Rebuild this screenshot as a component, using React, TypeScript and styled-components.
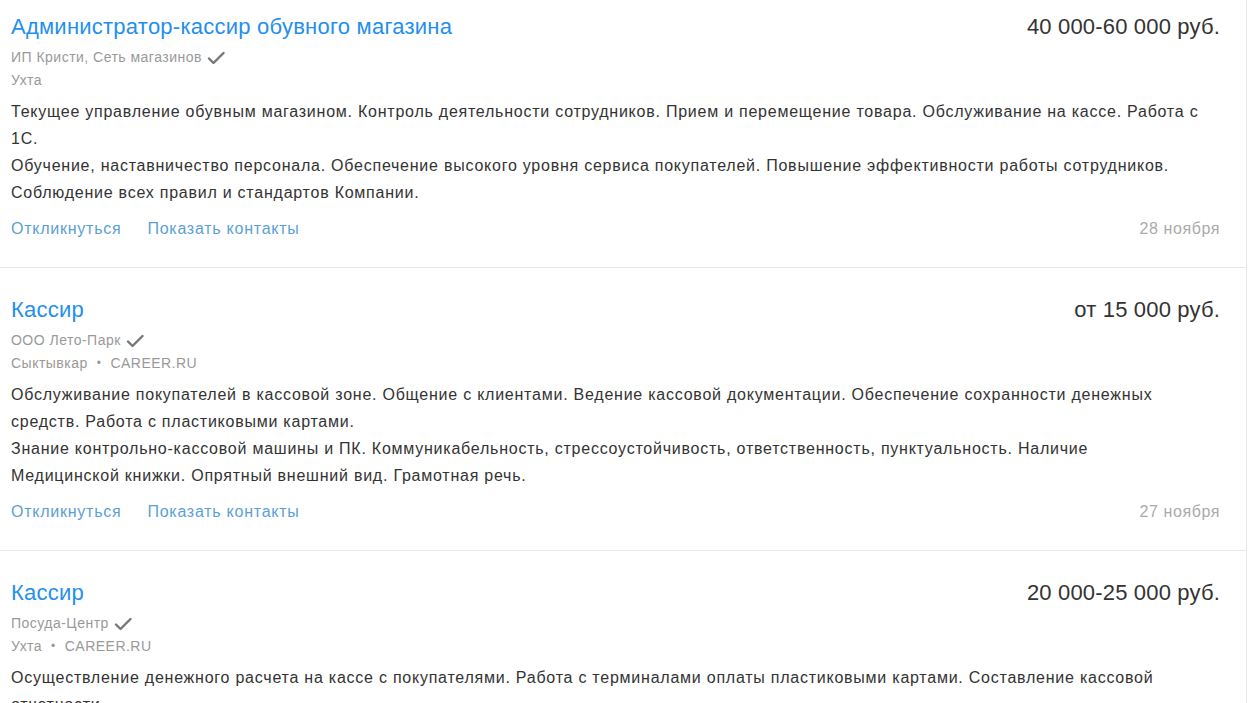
import React from "react";
import styled, { createGlobalStyle } from "styled-components";

const GlobalStyle = createGlobalStyle`
  html, body {
    margin: 0;
    padding: 0;
    overflow: hidden;
    background: #fff;
    font-family: "Liberation Sans", Arial, sans-serif;
  }
`;

interface Vacancy {
  title: string;
  salary: string;
  company: string;
  city: string;
  source?: string;
  paragraphs: string[];
  date: string;
}

const vacancies: Vacancy[] = [
  {
    title: "Администратор-кассир обувного магазина",
    salary: "40 000-60 000 руб.",
    company: "ИП Кристи, Сеть магазинов",
    city: "Ухта",
    paragraphs: [
      "Текущее управление обувным магазином. Контроль деятельности сотрудников. Прием и перемещение товара. Обслуживание на кассе. Работа с 1С.",
      "Обучение, наставничество персонала. Обеспечение высокого уровня сервиса покупателей. Повышение эффективности работы сотрудников. Соблюдение всех правил и стандартов Компании.",
    ],
    date: "28 ноября",
  },
  {
    title: "Кассир",
    salary: "от 15 000 руб.",
    company: "ООО Лето-Парк",
    city: "Сыктывкар",
    source: "CAREER.RU",
    paragraphs: [
      "Обслуживание покупателей в кассовой зоне. Общение с клиентами. Ведение кассовой документации. Обеспечение сохранности денежных средств. Работа с пластиковыми картами.",
      "Знание контрольно-кассовой машины и ПК. Коммуникабельность, стрессоустойчивость, ответственность, пунктуальность. Наличие Медицинской книжки. Опрятный внешний вид. Грамотная речь.",
    ],
    date: "27 ноября",
  },
  {
    title: "Кассир",
    salary: "20 000-25 000 руб.",
    company: "Посуда-Центр",
    city: "Ухта",
    source: "CAREER.RU",
    paragraphs: [
      "Осуществление денежного расчета на кассе с покупателями. Работа с терминалами оплаты пластиковыми картами. Составление кассовой отчетности.",
      "Ответственность, внимательность, доброжелательность. Опыт работы кассиром приветствуется.",
    ],
    date: "27 ноября",
  },
];

const List = styled.div`
  width: 1247px;
  box-sizing: border-box;
  border-right: 1px solid #e6e6e6;
`;

const Card = styled.div`
  padding: 28px 26px 25px 11px;
  border-bottom: 1px solid #e6e6e6;

  &:first-child {
    padding-top: 13px;
  }
`;

const TitleRow = styled.div`
  display: flex;
  justify-content: space-between;
  align-items: baseline;
  margin-bottom: 5px;
`;

const Title = styled.a`
  font-size: 22px;
  line-height: 28px;
  letter-spacing: 0.24px;
  color: #1f8ff0;
  text-decoration: none;
  cursor: pointer;
`;

const Salary = styled.div`
  font-size: 22px;
  line-height: 28px;
  letter-spacing: 0.17px;
  color: #333;
`;

const MetaRow = styled.div`
  display: flex;
  align-items: center;
  font-size: 14px;
  line-height: 23px;
  letter-spacing: 0.48px;
  color: #999;
`;

const Check = styled.svg`
  width: 18px;
  height: 14px;
  margin-left: 5px;
`;

const Dot = styled.span`
  margin: 0 9px 0 9px;
  font-size: 12px;
`;

const Description = styled.div`
  margin-top: 6px;
  padding-right: 20px;
  font-size: 16px;
  line-height: 27px;
  letter-spacing: 0.76px;
  color: #333;
`;

const Paragraph = styled.p`
  margin: 0;
`;

const Footer = styled.div`
  display: flex;
  align-items: center;
  margin-top: 9px;
  font-size: 16px;
  line-height: 27px;
  letter-spacing: 0.75px;
`;

const Action = styled.a`
  color: #5b9fd6;
  cursor: pointer;
  margin-right: 26px;
`;

const DateLabel = styled.span`
  margin-left: auto;
  color: #aaa;
  letter-spacing: 0.6px;
`;

const CheckIcon = () => (
  <Check viewBox="0 0 18 14">
    <path
      d="M2 7.5 L6.5 12 L16.5 2"
      fill="none"
      stroke="#777"
      strokeWidth="2.4"
      strokeLinecap="round"
      strokeLinejoin="round"
    />
  </Check>
);

export default function App() {
  return (
    <>
      <GlobalStyle />
      <List>
        {vacancies.map((v, i) => (
          <Card key={i}>
            <TitleRow>
              <Title>{v.title}</Title>
              <Salary>{v.salary}</Salary>
            </TitleRow>
            <MetaRow>
              {v.company}
              <CheckIcon />
            </MetaRow>
            <MetaRow>
              {v.city}
              {v.source && (
                <>
                  <Dot>•</Dot>
                  {v.source}
                </>
              )}
            </MetaRow>
            <Description>
              {v.paragraphs.map((p, j) => (
                <Paragraph key={j}>{p}</Paragraph>
              ))}
            </Description>
            <Footer>
              <Action>Откликнуться</Action>
              <Action>Показать контакты</Action>
              <DateLabel>{v.date}</DateLabel>
            </Footer>
          </Card>
        ))}
      </List>
    </>
  );
}
